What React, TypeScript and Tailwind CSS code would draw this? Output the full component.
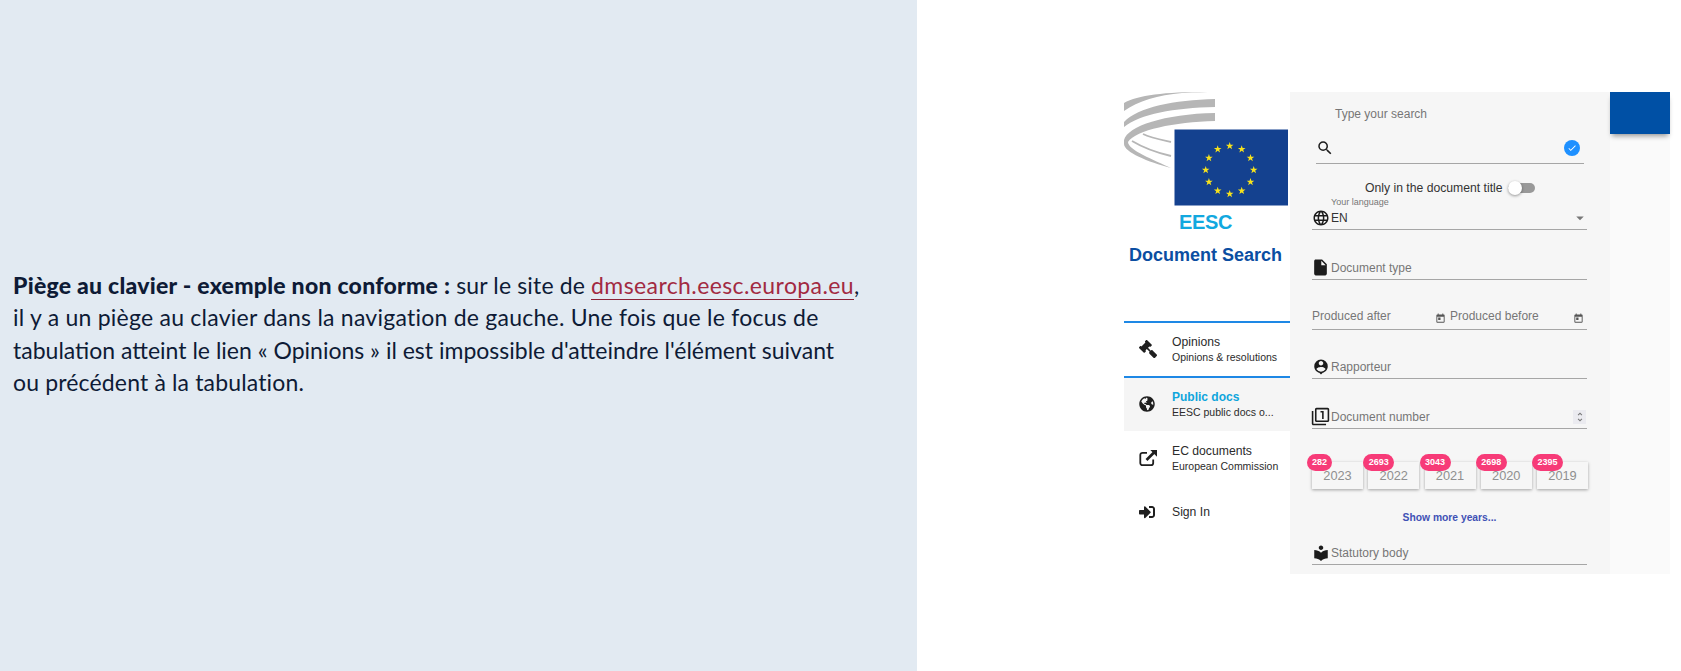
import type { ReactNode } from "react";
import { FaGavel, FaGlobeAmericas, FaSignInAlt } from "react-icons/fa";
import {
  MdArrowDropDown,
  MdCheck,
  MdFilter1,
  MdInsertDriveFile,
  MdLanguage,
  MdLocalLibrary,
  MdPersonPin,
  MdSearch,
  MdToday,
  MdUnfoldMore,
} from "react-icons/md";

const STAR_ANGLES = [0, 30, 60, 90, 120, 150, 180, 210, 240, 270, 300, 330];

function star(cx: number, cy: number, r: number) {
  const pts: string[] = [];
  for (let i = 0; i < 10; i++) {
    const rad = i % 2 === 0 ? r : r * 0.4;
    const t = ((i * 36 - 90) * Math.PI) / 180;
    pts.push(`${(cx + rad * Math.cos(t)).toFixed(2)},${(cy + rad * Math.sin(t)).toFixed(2)}`);
  }
  return pts.join(" ");
}

// arcs of the hemicycle behind the EU flag
function Logo() {
  return (
    <svg width={166} height={114} viewBox="0 0 166 114" className="block">
      <g fill="#b6b6b6">
        <path d="M0 11 C14 3 40 0 84 0 L58 1 C34 3 14 9 0 19 Z" />
        <path d="M0 30 C14 15 50 8 91 7 L91 15 C50 16 16 22 0 35 Z" />
        <path d="M0 48 C4 34 40 22 91 21 L91 29 C50 30 12 38 4 50 C4 58 30 68 47 76 L47 76 C24 70 0 60 0 52 Z" />
      </g>
      <g fill="none" stroke="#b6b6b6" strokeWidth={1.8}>
        <path d="M19 42 C27 46 38 48 47 50" />
        <path d="M8 49 C18 55 34 61 47 64" />
      </g>
      <rect x={50.5} y={37.5} width={113.5} height={76} fill="#14418f" />
      {STAR_ANGLES.map((a) => {
        const t = (a * Math.PI) / 180;
        return (
          <polygon
            key={a}
            points={star(105.7 + 24 * Math.sin(t), 78 - 24 * Math.cos(t), 4)}
            fill="#f7e21c"
          />
        );
      })}
    </svg>
  );
}

function ExternalIcon() {
  return (
    <svg width={19} height={18} viewBox="0 0 19 18" fill="none" stroke="currentColor">
      <path d="M8 3.8 H3.5 a2.2 2.2 0 0 0 -2.2 2.2 V14 a2.2 2.2 0 0 0 2.2 2.2 H12 a2.2 2.2 0 0 0 2.2 -2.2 V10.5" strokeWidth={1.8} />
      <path d="M7.5 11 L15 3.5" strokeWidth={2.6} />
      <path d="M11.3 1 H18 V7.7 Z" fill="currentColor" stroke="none" />
    </svg>
  );
}

type NavItemProps = {
  icon: ReactNode;
  title: string;
  sub?: string;
  active?: boolean;
  className?: string;
};

function NavItem({ icon, title, sub, active, className }: NavItemProps) {
  return (
    <div className={`flex items-center pl-[15px] ${active ? "bg-[#f5f5f5]" : ""} ${className ?? ""}`}>
      <span className="flex w-[33px] shrink-0 text-[#1f1f1f]">{icon}</span>
      <div className="min-w-0 flex-1 pr-2">
        <div className={`leading-[16px] ${active ? "text-[12px] font-bold text-[#0fa5dc]" : "text-[12.2px] text-[#2b2b2b]"}`}>
          {title}
        </div>
        {sub && <div className="truncate text-[10.5px] leading-[14px] text-[#2b2b2b]">{sub}</div>}
      </div>
    </div>
  );
}

type FieldProps = {
  icon?: ReactNode;
  children: ReactNode;
  right?: ReactNode;
  className?: string;
};

function Field({ icon, children, right, className }: FieldProps) {
  return (
    <div className={`flex items-center border-b border-[#a6a6a6] text-[12px] text-[#767676] ${className ?? ""}`}>
      <span className="flex w-[19px] shrink-0 text-[#1c1c1c]">{icon}</span>
      <span className="flex-1">{children}</span>
      {right}
    </div>
  );
}

const YEARS = [
  { year: "2023", count: "282", badge: "w-[25px]" },
  { year: "2022", count: "2693", badge: "w-[31px]" },
  { year: "2021", count: "3043", badge: "w-[31px]" },
  { year: "2020", count: "2698", badge: "w-[31px]" },
  { year: "2019", count: "2395", badge: "w-[31px]" },
];

function YearChip({ year, count, badge }: { year: string; count: string; badge: string }) {
  return (
    <div className="relative flex h-[27px] w-[51px] items-center justify-center bg-[#f6f6f6] text-[12.8px] text-[#8f8f8f] shadow-[0_1px_3px_rgba(0,0,0,0.35)]">
      {year}
      <span
        className={`absolute left-[-5px] top-[-8px] flex h-[17px] items-center justify-center rounded-full bg-[#f73b78] text-[9px] font-bold text-white ${badge}`}
      >
        {count}
      </span>
    </div>
  );
}

export default function App() {
  return (
    <div className="flex h-[671px] w-[1681px] bg-white font-['Liberation_Sans',Arial,sans-serif]">
      <section className="flex w-[917px] shrink-0 items-center bg-[#e2eaf2] pb-[4px] pl-[13px]">
        <p className="font-['Lato',sans-serif] text-[23px] leading-[32.5px] tracking-[0.24px] text-[#0e1b36]">
          <strong className="font-black tracking-[0.25px]">Piège au clavier - exemple non conforme :</strong>
          <span className="tracking-[0.15px]"> sur le site de </span>
          <a className="border-b border-[#8c2338] tracking-[0.4px] text-[#a22a42]">dmsearch.eesc.europa.eu</a>,
          <br />
          il y a un piège au clavier dans la navigation de gauche. Une fois que le focus de
          <br />
          <span className="tracking-[0px]">tabulation atteint le lien « Opinions » il est impossible d'atteindre l'élément suivant</span>
          <br />
          <span className="tracking-[0.15px]">ou précédent à la tabulation.</span>
        </p>
      </section>

      <section className="flex flex-1 items-start pl-[207px] pt-[92px]">
        <nav className="w-[166px] shrink-0">
          <Logo />
          <div className="mt-[5px] pl-[55px] text-[20px] font-bold leading-[23px] tracking-[-0.3px] text-[#12a8df]">EESC</div>
          <div className="mt-[10px] pl-[5px] text-[18px] font-bold leading-[22px] text-[#0b4ea2]">Document Search</div>
          <div className="mt-[55px] h-[57px] border-y-2 border-[#1e88e5]">
            <NavItem
              icon={<FaGavel size={18} className="-scale-x-100" />}
              title="Opinions"
              sub="Opinions & resolutions"
              className="h-full pb-[2px]"
            />
          </div>
          <NavItem
            active
            icon={<FaGlobeAmericas size={16} />}
            title="Public docs"
            sub="EESC public docs o..."
            className="h-[53px] pb-[2px]"
          />
          <NavItem icon={<ExternalIcon />} title="EC documents" sub="European Commission" className="h-[54px]" />
          <NavItem icon={<FaSignInAlt size={16} />} title="Sign In" className="h-[54px]" />
        </nav>

        <div className="flex h-[482px] w-[320px] shrink-0 flex-col bg-[#f6f6f6] pl-[22px] pr-[23px]">
          <div className="mt-[13px] pl-[23px] text-[12px] leading-[18px] text-[#767676]">Type your search</div>
          <div className="ml-[4px] mr-[3px] mt-[14px] flex h-[27px] items-center justify-between border-b border-[#a6a6a6] pb-[4px] pr-[4px]">
            <MdSearch size={18} className="text-[#1c1c1c]" />
            <span className="flex h-[16px] w-[16px] items-center justify-center rounded-full bg-[#1e90ff] text-white">
              <MdCheck size={10} />
            </span>
          </div>
          <div className="mt-[15px] flex items-center pl-[53px] text-[12.2px] leading-[18px] text-[#333333]">
            Only in the document title
            <span className="relative ml-[5px] h-[10px] w-[27px] rounded-full bg-[#999999]">
              <span className="absolute left-0 top-[-2px] h-[14px] w-[14px] rounded-full bg-white shadow-[0_1px_3px_rgba(0,0,0,0.4)]" />
            </span>
          </div>
          <div className="pl-[19px] text-[9px] leading-[10px] text-[#767676]">Your language</div>
          <Field
            className="h-[23px]"
            icon={<MdLanguage size={18} />}
            right={<MdArrowDropDown size={18} className="-mr-[2px] text-[#777777]" />}
          >
            <span className="text-[#333333]">EN</span>
          </Field>
          <Field className="mt-[26px] h-[24px]" icon={<MdInsertDriveFile size={19} className="-ml-[1px]" />}>
            Document type
          </Field>
          <div className="mt-[26px] flex h-[24px] items-center border-b border-[#a6a6a6] pr-[3px] text-[12px] text-[#767676]">
            <span className="flex-1 pb-[3px]">Produced after</span>
            <MdToday size={11} className="mt-[2px] text-[#555555]" />
            <span className="ml-[4px] w-[123px] pb-[3px]">Produced before</span>
            <MdToday size={11} className="mt-[2px] text-[#555555]" />
          </div>
          <Field className="mt-[25px] h-[24px]" icon={<MdPersonPin size={18} />}>
            Rapporteur
          </Field>
          <Field
            className="mt-[26px] h-[24px]"
            icon={<MdFilter1 size={19} className="-ml-[1px]" />}
            right={
              <span className="mr-[1px] flex h-[14px] w-[13px] items-center justify-center bg-[#ebebf0] text-[#777777]">
                <MdUnfoldMore size={12} />
              </span>
            }
          >
            Document number
          </Field>
          <div className="-mr-[1px] mt-[33px] flex justify-between">
            {YEARS.map((y) => (
              <YearChip key={y.year} {...y} />
            ))}
          </div>
          <div className="mt-[22px] text-center text-[10.3px] font-bold leading-[14px] text-[#3f51b5]">Show more years...</div>
          <Field className="mt-[16px] h-[24px]" icon={<MdLocalLibrary size={18} />}>
            Statutory body
          </Field>
        </div>

        <aside className="flex h-[482px] w-[60px] shrink-0 flex-col bg-[#fafafa]">
          <div className="h-[42px] bg-[#0050a5] shadow-[0_4px_5px_-2px_rgba(0,0,0,0.4)]" />
        </aside>
      </section>
    </div>
  );
}
